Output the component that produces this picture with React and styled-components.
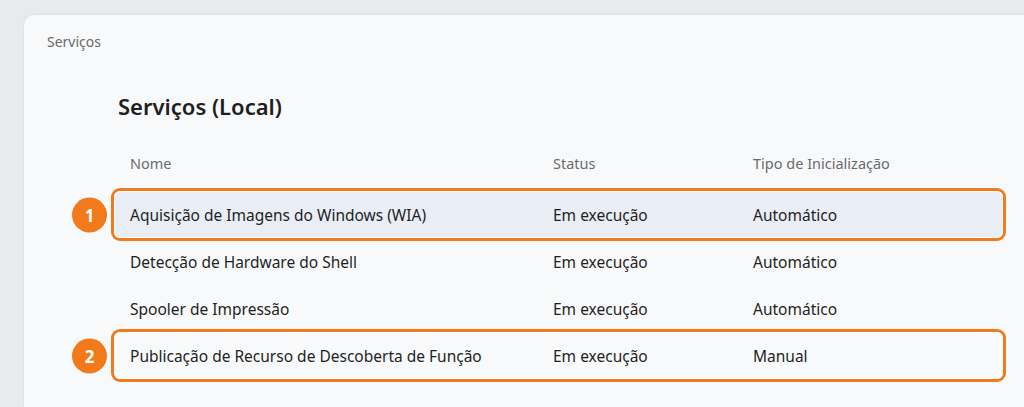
import React from "react";
import styled, { createGlobalStyle } from "styled-components";

const Global = createGlobalStyle`
  html, body { margin: 0; padding: 0; }
  body {
    background: #e8eaee;
    font-family: "Noto Sans", "Open Sans", sans-serif;
    overflow: hidden;
  }
`;

const Page = styled.div`
  width: 1024px;
  height: 407px;
  padding: 15px 0 0 24px;
  box-sizing: border-box;
`;

const Card = styled.div`
  height: 100%;
  background: #f8f9fb;
  border-radius: 10px 0 0 0;
  box-shadow: 0 0 3px rgba(0, 0, 0, 0.08);
  padding: 18px 0 0 23px;
  box-sizing: border-box;
`;

const Crumb = styled.div`
  font-size: 14px;
  line-height: 18px;
  color: #6a6a6a;
`;

const Content = styled.div`
  margin: 40px 0 0 64px;
  width: 895px;
`;

const Title = styled.h1`
  margin: 0;
  padding-left: 7px;
  font-size: 22px;
  line-height: 30px;
  font-weight: 600;
  color: #1f1f1f;
`;

const Grid = styled.div`
  display: grid;
  grid-template-columns: 423px 200px 1fr;
  align-items: center;
`;

const Header = styled(Grid)`
  margin-top: 32px;
  margin-bottom: 18px;
  padding-left: 19px;
  height: 20px;
  font-size: 14.5px;
  color: #6b6b6b;
`;

const Rows = styled.div`
  display: flex;
  flex-direction: column;
  margin-left: 3px;
  width: 889px;
`;

const Row = styled(Grid)`
  position: relative;
  height: 47px;
  padding-left: 16px;
  font-size: 15.5px;
  color: #1f1f1f;
  border-radius: 6px;
  background: ${(p) => (p.$selected ? "#e9eef6" : "transparent")};
  box-shadow: ${(p) =>
    p.$marked ? "inset 0 0 0 1px #ffffff, 0 0 0 3px #f27a1b" : "none"};
`;

const Badge = styled.span`
  position: absolute;
  right: calc(100% + 7px);
  top: 50%;
  transform: translateY(-50%);
  width: 35px;
  height: 35px;
  border-radius: 50%;
  background: #f27a1b;
  color: #ffffff;
  font-weight: 700;
  font-size: 17px;
  display: flex;
  align-items: center;
  justify-content: center;
`;

const rows = [
  { name: "Aquisição de Imagens do Windows (WIA)", status: "Em execução", type: "Automático", badge: 1, selected: true },
  { name: "Detecção de Hardware do Shell", status: "Em execução", type: "Automático" },
  { name: "Spooler de Impressão", status: "Em execução", type: "Automático" },
  { name: "Publicação de Recurso de Descoberta de Função", status: "Em execução", type: "Manual", badge: 2 },
];

export default function App() {
  return (
    <>
      <Global />
      <Page>
        <Card>
          <Crumb>Serviços</Crumb>
          <Content>
            <Title>Serviços (Local)</Title>
            <Header>
              <span>Nome</span>
              <span>Status</span>
              <span>Tipo de Inicialização</span>
            </Header>
            <Rows>
              {rows.map((r) => (
                <Row key={r.name} $selected={r.selected} $marked={!!r.badge}>
                  {r.badge && <Badge>{r.badge}</Badge>}
                  <span>{r.name}</span>
                  <span>{r.status}</span>
                  <span>{r.type}</span>
                </Row>
              ))}
            </Rows>
          </Content>
        </Card>
      </Page>
    </>
  );
}
